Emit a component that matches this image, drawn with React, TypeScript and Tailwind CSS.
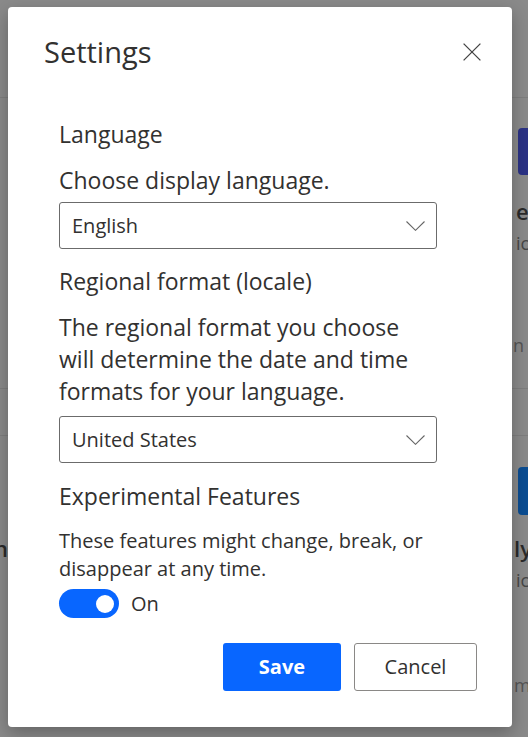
import React from "react";

const Chevron = () => (
  <svg width="19" height="10" viewBox="0 0 19 10" fill="none">
    <path d="M0.5 0.5 L9.5 9.3 L18.5 0.5" stroke="#666" strokeWidth="1.1" />
  </svg>
);

const Select = ({ value }: { value: string }) => (
  <div className="flex h-[47px] w-[378px] items-center justify-between rounded-[3px] border border-[#6b6b6b] pl-[12px] pr-[11px] bg-white">
    <span className="text-[20px] leading-[28px] text-[#323130]">{value}</span>
    <Chevron />
  </div>
);

export default function App() {
  return (
    <div
      className="relative h-[737px] w-[528px] overflow-hidden bg-[#8a8a8a]"
      style={{ fontFamily: '"Open Sans", "Noto Sans", sans-serif' }}
    >
      {/* dimmed page behind the overlay */}
      <div className="absolute left-0 right-0 top-[97px] h-px bg-[#7e7e7e]" />
      <div className="absolute left-0 right-0 top-[388px] h-px bg-[#7e7e7e]" />
      <div className="absolute left-0 right-0 top-[435px] h-px bg-[#7e7e7e]" />
      <div className="absolute left-[518px] top-[128px] h-[47px] w-[30px] rounded-[4px] bg-[#2b3285]" />
      <div className="absolute left-[518px] top-[467px] h-[48px] w-[30px] rounded-[4px] bg-[#0b4d92]" />
      <div className="absolute left-[516px] top-[196px] text-[22px] font-semibold leading-[30px] text-[#2a2a2a]">e</div>
      <div className="absolute left-[516px] top-[230px] text-[18px] leading-[26px] text-[#474747]">ic</div>
      <div className="absolute left-[513px] top-[332px] text-[18px] leading-[26px] text-[#555]">n</div>
      <div className="absolute left-[514px] top-[533px] text-[22px] font-semibold leading-[30px] text-[#2a2a2a]">ly</div>
      <div className="absolute left-[516px] top-[567px] text-[18px] leading-[26px] text-[#474747]">ic</div>
      <div className="absolute left-[514px] top-[672px] text-[18px] leading-[26px] text-[#555]">m</div>
      <div className="absolute left-[-6px] top-[533px] text-[22px] font-semibold leading-[30px] text-[#2a2a2a]">n</div>

      {/* dialog */}
      <div className="absolute left-[8px] top-[7px] flex h-[720px] w-[504px] flex-col rounded-[4px] bg-white pt-[27px] shadow-[0_6px_18px_rgba(0,0,0,0.28)]">
        <div className="flex h-[36px] items-center justify-between pl-[36px] pr-[31px]">
          <h1 className="text-[29px] leading-[36px] text-[#323130]">Settings</h1>
          <button className="flex h-[18px] w-[18px] items-center justify-center">
            <svg width="18" height="18" viewBox="0 0 18 18" fill="none">
              <path d="M0.6 0.6 L17.4 17.4 M17.4 0.6 L0.6 17.4" stroke="#444" strokeWidth="1.3" />
            </svg>
          </button>
        </div>

        <div className="mt-[48px] flex flex-col pl-[51px] pr-[75px] text-[#323130]">
          <h2 className="text-[23px] leading-[32px]">Language</h2>
          <p className="mt-[14px] text-[23px] leading-[32px]">Choose display language.</p>
          <div className="mt-[6px]">
            <Select value="English" />
          </div>
          <h2 className="mt-[16px] text-[23px] leading-[32px]">Regional format (locale)</h2>
          <p className="mt-[14px] w-[362px] text-[23px] leading-[32px]">
            The regional format you choose will determine the date and time formats for your language.
          </p>
          <div className="mt-[9px]">
            <Select value="United States" />
          </div>
          <h2 className="mt-[17px] text-[23px] leading-[32px]">Experimental Features</h2>
          <p className="mt-[15px] text-[20px] leading-[28px]">
            These features might change, break, or disappear at any time.
          </p>
          <div className="mt-[6px] flex items-center gap-[12px]">
            <div className="flex h-[29px] w-[60px] items-center justify-end rounded-full bg-[#0866ff] pr-[5px]">
              <div className="h-[18px] w-[18px] rounded-full bg-white" />
            </div>
            <span className="text-[20px] leading-[28px]">On</span>
          </div>
        </div>

        <div className="mt-[25px] flex justify-end gap-[13px] pr-[35px]">
          <button className="flex h-[48px] w-[118px] items-center justify-center rounded-[3px] bg-[#0866ff] text-[20px] font-bold text-white">
            Save
          </button>
          <button className="flex h-[48px] w-[123px] items-center justify-center rounded-[3px] border border-[#8a8886] bg-white text-[20px] text-[#323130]">
            Cancel
          </button>
        </div>
      </div>
    </div>
  );
}
